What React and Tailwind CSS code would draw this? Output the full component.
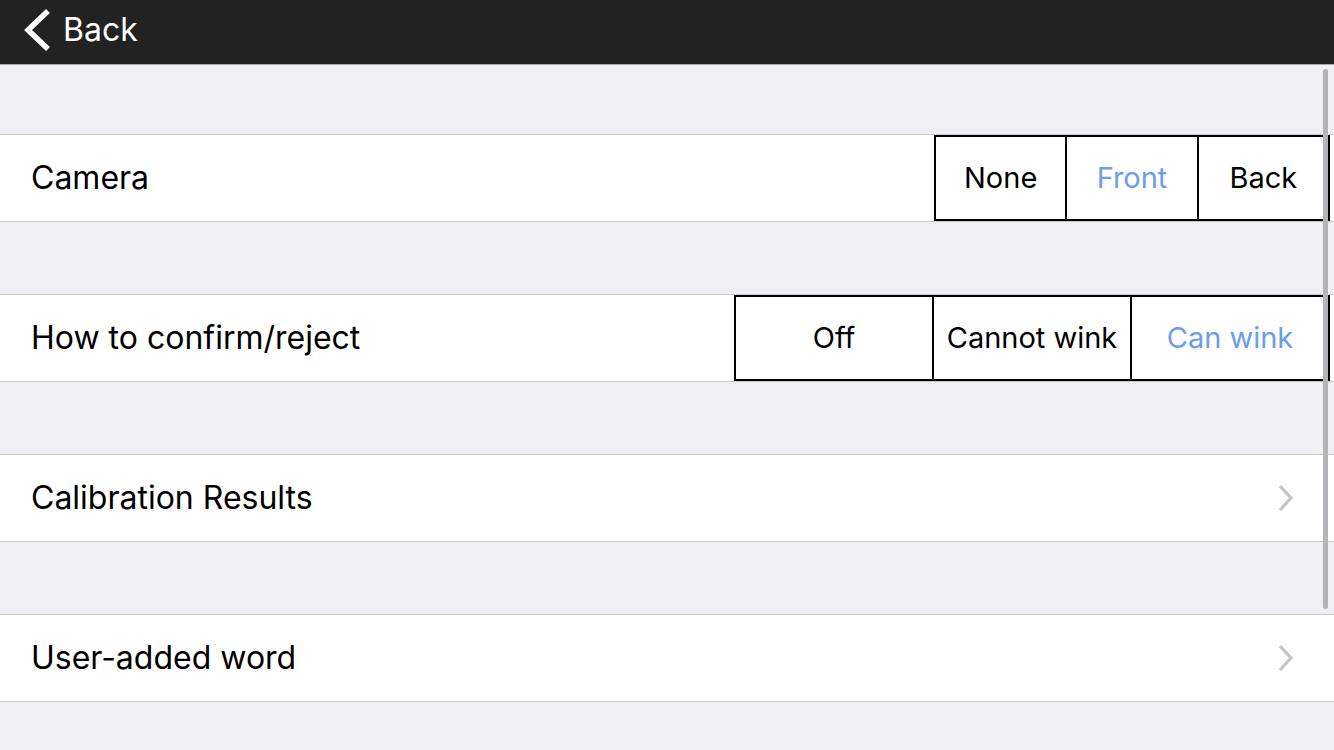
import React, { useState } from 'react';

const Segmented = ({ options, value, onChange, width }) => (
  <div className={`flex h-full self-stretch border-2 border-black mr-[4px] ${width}`}>
    {options.map((opt, i) => (
      <button
        key={opt}
        onClick={() => onChange(opt)}
        className={`flex-1 flex items-center justify-center text-[29px] ${i > 0 ? 'border-l-2 border-black' : ''} ${
          value === opt ? 'text-[#6b9de9]' : 'text-black'
        }`}
      >
        {opt}
      </button>
    ))}
  </div>
);

const Chevron = () => (
  <svg width="16" height="28" viewBox="0 0 16 28" className="mr-[40px]">
    <path d="M2 2 L13 14 L2 26" fill="none" stroke="#c4c4c9" strokeWidth="3.2" />
  </svg>
);

const Row = ({ label, children }) => (
  <div className="h-[88px] bg-white border-y border-[#c8c7cc] flex items-center justify-between">
    <span className="pl-[31px] text-[32px] text-black">{label}</span>
    {children}
  </div>
);

const App = () => {
  const [camera, setCamera] = useState('Front');
  const [confirm, setConfirm] = useState('Can wink');

  return (
    <div className="relative h-[750px] w-[1334px] overflow-hidden bg-[#efeff4]" style={{ fontFamily: 'Inter, Roboto, sans-serif' }}>
      {/* Nav bar */}
      <div className="h-[65px] bg-[#222222] border-b border-[#a8a8ac] flex items-center">
        <button className="flex items-center text-white text-[32px] pl-[23px] -mt-[4px]">
          <svg width="28" height="44" viewBox="0 0 28 44" className="mr-[12px]">
            <path d="M25 3 L5 22 L25 41" fill="none" stroke="white" strokeWidth="5.5" />
          </svg>
          Back
        </button>
      </div>

      <div className="h-[69px]" />
      <Row label="Camera">
        <Segmented options={['None', 'Front', 'Back']} value={camera} onChange={setCamera} width="w-[396px]" />
      </Row>

      <div className="h-[72px]" />
      <Row label="How to confirm/reject">
        <Segmented options={['Off', 'Cannot wink', 'Can wink']} value={confirm} onChange={setConfirm} width="w-[596px]" />
      </Row>

      <div className="h-[72px]" />
      <Row label="Calibration Results">
        <Chevron />
      </Row>

      <div className="h-[72px]" />
      <Row label="User-added word">
        <Chevron />
      </Row>

      {/* scroll indicator */}
      <div className="absolute left-[1323px] top-[69px] w-[5px] h-[540px] rounded-full bg-[#b4b4b8]" />
    </div>
  );
};

export default App;
